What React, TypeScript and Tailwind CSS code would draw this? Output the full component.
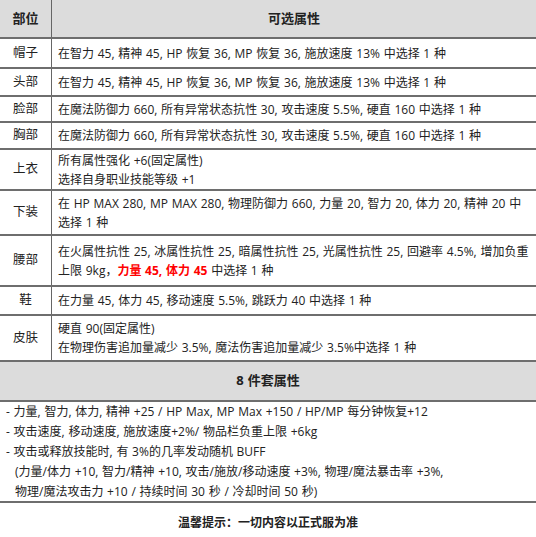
import React from "react"

const rows: { part: string; h: string; lines: React.ReactNode[] }[] = [
  { part: "帽子", h: "h-[30px]", lines: ["在智力 45, 精神 45, HP 恢复 36, MP 恢复 36, 施放速度 13% 中选择 1 种"] },
  { part: "头部", h: "h-[28px]", lines: ["在智力 45, 精神 45, HP 恢复 36, MP 恢复 36, 施放速度 13% 中选择 1 种"] },
  { part: "脸部", h: "h-[26px]", lines: ["在魔法防御力 660, 所有异常状态抗性 30, 攻击速度 5.5%, 硬直 160 中选择 1 种"] },
  { part: "胸部", h: "h-[27px]", lines: ["在魔法防御力 660, 所有异常状态抗性 30, 攻击速度 5.5%, 硬直 160 中选择 1 种"] },
  { part: "上衣", h: "h-[41px]", lines: ["所有属性强化 +6(固定属性)", "选择自身职业技能等级 +1"] },
  {
    part: "下装",
    h: "h-[45px]",
    lines: ["在 HP MAX 280, MP MAX 280, 物理防御力 660, 力量 20, 智力 20, 体力 20, 精神 20 中", "选择 1 种"],
  },
  {
    part: "腰部",
    h: "h-[51px]",
    lines: [
      "在火属性抗性 25, 冰属性抗性 25, 暗属性抗性 25, 光属性抗性 25, 回避率 4.5%, 增加负重",
      <>
        上限 9kg，<span className="font-bold text-[#ff0000]">力量 45, 体力 45</span> 中选择 1 种
      </>,
    ],
  },
  { part: "鞋", h: "h-[29px]", lines: ["在力量 45, 体力 45, 移动速度 5.5%, 跳跃力 40 中选择 1 种"] },
  { part: "皮肤", h: "h-[46px]", lines: ["硬直 90(固定属性)", "在物理伤害追加量减少 3.5%, 魔法伤害追加量减少 3.5%中选择 1 种"] },
]

export default function App() {
  return (
    <div className="w-[536px] h-[537px] overflow-hidden bg-white text-[#222] text-[12px] [word-spacing:0.6px] font-['Open_Sans','Noto_Sans_CJK_SC',sans-serif] whitespace-pre">
      <div className="flex h-[39px] bg-[#dcdcdc] border-b-2 border-[#6e6e6e] font-bold text-[13px]">
        <div className="w-[52px] shrink-0 border-r border-[#666] flex items-center justify-center">部位</div>
        <div className="flex-1 flex items-center justify-center">可选属性</div>
      </div>
      {rows.map((r) => (
        <div key={r.part} className={`flex ${r.h} border-b-2 border-[#6e6e6e]`}>
          <div className="w-[52px] shrink-0 border-r border-[#666] flex items-center justify-center text-[12.5px]">{r.part}</div>
          <div className="flex-1 min-w-0 flex flex-col justify-center pl-[6px] leading-[19px]">
            {r.lines.map((l, i) => (
              <div key={i}>{l}</div>
            ))}
          </div>
        </div>
      ))}
      <div className="h-[40px] bg-[#dcdcdc] border-b-2 border-[#6e6e6e] flex items-center justify-center font-bold text-[13px]">
        8 件套属性
      </div>
      <div className="h-[101px] border-b-2 border-[#6e6e6e] flex flex-col justify-center pl-[6px] leading-[20px]">
        <div>- 力量, 智力, 体力, 精神 +25 / HP Max, MP Max +150 / HP/MP 每分钟恢复+12</div>
        <div>- 攻击速度, 移动速度, 施放速度+2%/ 物品栏负重上限 +6kg</div>
        <div>- 攻击或释放技能时, 有 3%的几率发动随机 BUFF</div>
        <div className="pl-[9px]">(力量/体力 +10, 智力/精神 +10, 攻击/施放/移动速度 +3%, 物理/魔法暴击率 +3%,</div>
        <div className="pl-[9px]">物理/魔法攻击力 +10 / 持续时间 30 秒 / 冷却时间 50 秒)</div>
      </div>
      <div className="flex justify-center pt-[11px] font-bold">温馨提示：一切内容以正式服为准</div>
    </div>
  )
}
